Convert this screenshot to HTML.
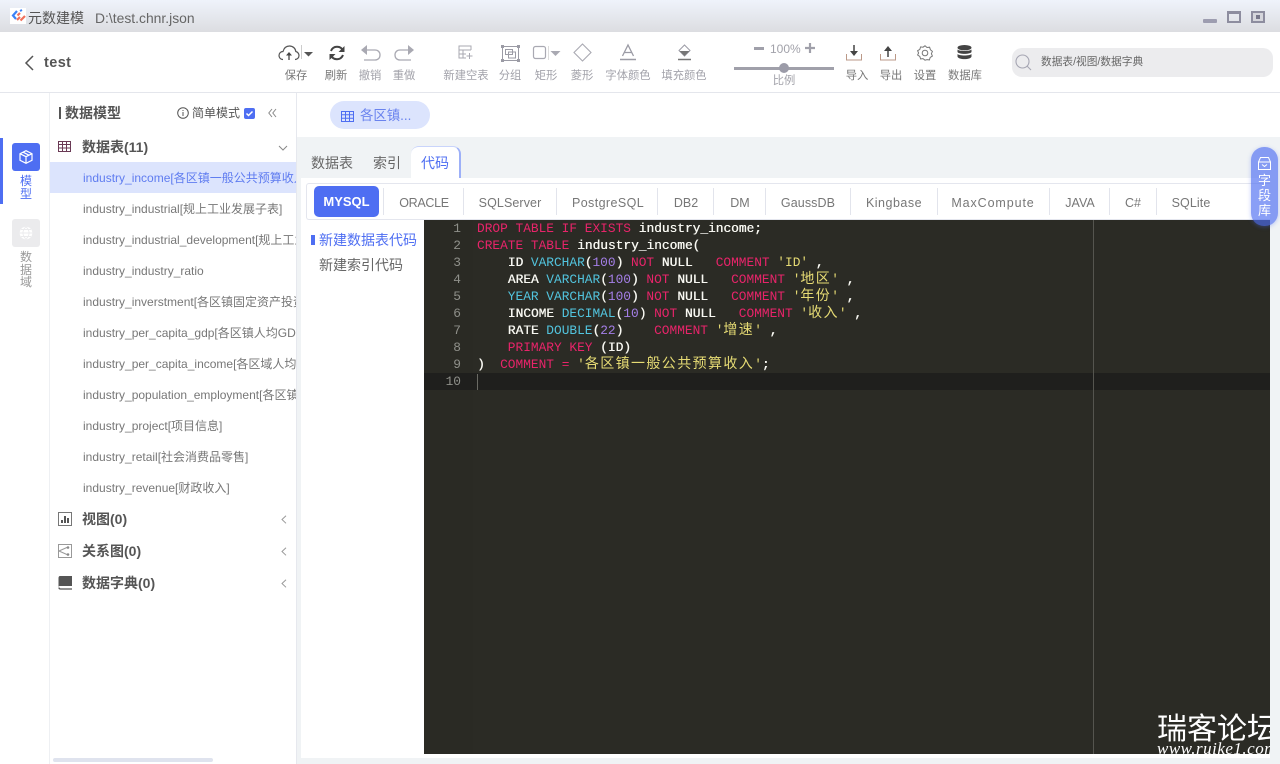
<!DOCTYPE html>
<html lang="zh"><head><meta charset="utf-8"><title>元数建模</title>
<style>
*{box-sizing:border-box;margin:0;padding:0}
html,body{width:1280px;height:764px;overflow:hidden;background:#fff;font-family:"Liberation Sans","Noto Sans CJK SC",sans-serif;color:#555}
.a{position:absolute;white-space:nowrap}
.lbl{position:absolute;top:69px;font-size:11.3px;line-height:14px;color:#777;transform:translateX(-50%);white-space:nowrap}
.lbl.dim{color:#a2a2aa}
.dim{color:#a2a2aa}
svg{position:absolute;overflow:visible}
.t{position:absolute;left:50px;width:246px;height:31px;line-height:33px;padding-left:33px;font-size:12px;color:#777;white-space:nowrap;overflow:hidden}
.g{position:absolute;left:82px;font-size:14px;font-weight:bold;color:#555;line-height:20px;white-space:nowrap}
.db{position:absolute;top:185px;height:35px;line-height:36px;font-size:12.5px;color:#777;transform:translateX(-50%);white-space:nowrap}
.sep{position:absolute;top:188px;width:1px;height:27px;background:#e2e4ec}
#code{position:absolute;left:477px;top:220px;font:12.83px/17px "Liberation Mono","Noto Sans CJK SC",monospace;color:#f8f8f2;white-space:pre;text-shadow:.35px 0 0 #f8f8f2}
#nums{position:absolute;left:424px;top:220px;width:37px;text-align:right;font:12.83px/17px "Liberation Mono",monospace;color:#8f908a}
.k{color:#e8246a;text-shadow:none}.y{color:#52c4de;text-shadow:none}.n{color:#a57fe8;text-shadow:none}.s{color:#e6db74;text-shadow:none}.c{font-size:14px;line-height:0;letter-spacing:1.4px}
</style></head><body>

<!-- title bar -->
<div class="a" style="left:0;top:0;width:1280px;height:32px;background:linear-gradient(#eff3fb,#dcdde1)"></div>
<svg style="left:10px;top:8px" width="16" height="16" viewBox="0 0 16 16"><rect width="16" height="16" fill="#fff"/><path d="M7 3L3 7.500 6 11" fill="none" stroke="#3b82f6" stroke-width="2.200"/><path d="M7 12l3-3M10 5L7.500 7.500" stroke="#f0705a" stroke-width="2.200"/><path d="M10 3l2-1" stroke="#3b82f6" stroke-width="2"/><path d="M10.500 12.500L15 8" stroke="#f0705a" stroke-width="2.200"/></svg>
<div class="a" style="left:28px;top:8px;font-size:14px;line-height:20px;color:#555">元数建模</div>
<div class="a" style="left:95px;top:9px;font-size:13.9px;line-height:18px;color:#666">D:\test.chnr.json</div>
<div class="a" style="left:1203px;top:19px;width:14px;height:4px;background:#9d9db0;border-radius:1px"></div>
<div class="a" style="left:1227px;top:11px;width:14px;height:12px;border:2px solid #8d8d9f;border-top-width:3px"></div>
<div class="a" style="left:1251px;top:11px;width:14px;height:12px;border:2px solid #8d8d9f;background:#d5d6dc"></div>
<div class="a" style="left:1256px;top:15px;width:4px;height:4px;background:#77778a"></div>

<!-- toolbar -->
<div class="a" style="left:0;top:92px;width:1280px;height:1px;background:#e4e6ec"></div>
<svg style="left:24px;top:55px" width="10" height="16" viewBox="0 0 10 16"><path d="M9 1L2 8l7 7" fill="none" stroke="#555" stroke-width="1.500"/></svg>
<div class="a" style="left:44px;top:53px;font-size:14.5px;font-weight:bold;line-height:20px;color:#555;letter-spacing:.4px">test</div>

<svg style="left:278px;top:44px" width="36" height="18" viewBox="0 0 36 18"><path d="M5 15.500C2 15.500 1 13 1 11.500 1 9 3 7.500 5 7.500 6 4 8.500 2 11.500 2 15 2 17.500 4.500 17.800 7.500 20 8 21 10 21 11.500 21 14 19 15.500 17 15.500" fill="none" stroke="#555" stroke-width="1.200"/><path d="M11 16V9" stroke="#444" stroke-width="1.300"/><path d="M8 11.500h6L11 8z" fill="#444"/><path d="M23.500 1v14" stroke="#ccc"/><path d="M26 8h9l-4.500 4.500z" fill="#555"/></svg>
<div class="lbl" style="left:296px">保存</div>
<svg style="left:329px;top:45px" width="16" height="16" viewBox="0 0 16 16"><path d="M14 6C13 3 10.500 1.800 8 1.800 5 1.800 3 3.500 2 6M2 10c1 3 3.500 4.200 6 4.200 3 0 5-1.700 6-4.200" fill="none" stroke="#444" stroke-width="2"/><path d="M15.500 1v6h-6zM.5 15V9h6z" fill="#444"/></svg>
<div class="lbl" style="left:336px">刷新</div>
<svg style="left:360px;top:44px" width="21" height="18" viewBox="0 0 21 18"><path d="M2 6h13c3 0 5 2 5 5s-2 5-5 5H4" fill="none" stroke="#a9a9b2" stroke-width="1.300"/><path d="M1 6l6-5v10z" fill="#a9a9b2"/></svg>
<div class="lbl dim" style="left:370px">撤销</div>
<svg style="left:394px;top:44px" width="21" height="18" viewBox="0 0 21 18"><path d="M19 6H6C3 6 1 8 1 11s2 5 5 5h11" fill="none" stroke="#a9a9b2" stroke-width="1.300"/><path d="M20 6l-6-5v10z" fill="#a9a9b2"/></svg>
<div class="lbl dim" style="left:404px">重做</div>

<svg style="left:458px;top:45px" width="15" height="15" viewBox="0 0 15 15"><path d="M13 5V1H1v12h7M1 5h12M1 9h7M5 5v8" fill="none" stroke="#a9a9b2"/><path d="M11.500 8v6M8.500 11h6" stroke="#a9a9b2"/></svg>
<div class="lbl dim" style="left:466px">新建空表</div>
<svg style="left:501px;top:45px" width="19" height="17" viewBox="0 0 19 17"><rect x="1.500" y="1.500" width="16" height="14" fill="none" stroke="#9b9ba5"/><rect x="4.500" y="4.500" width="7" height="5" fill="none" stroke="#9b9ba5"/><rect x="7.500" y="7" width="7" height="6" fill="none" stroke="#9b9ba5"/><path d="M0 0h3v3H0zM16 0h3v3h-3zM0 14h3v3H0zM16 14h3v3h-3z" fill="#9b9ba5"/></svg>
<div class="lbl dim" style="left:510px">分组</div>
<svg style="left:533px;top:46px" width="28" height="14" viewBox="0 0 28 14"><rect x=".5" y=".5" width="12" height="12" rx="2" fill="none" stroke="#a9a9b2" stroke-width="1.200"/><path d="M15.500 0v14" stroke="#ddd"/><path d="M17.500 5h10l-5 5z" fill="#a9a9b2"/></svg>
<div class="lbl dim" style="left:546px">矩形</div>
<svg style="left:573px;top:43px" width="19" height="19" viewBox="0 0 19 19"><path d="M9.500 1l8.500 8.500-8.500 8.500L1 9.500z" fill="none" stroke="#a9a9b2" stroke-width="1.100"/></svg>
<div class="lbl dim" style="left:582px">菱形</div>
<svg style="left:620px;top:44px" width="16" height="17" viewBox="0 0 16 17"><path d="M2.500 12L8 1l5.500 11M4.500 8.500h7" fill="none" stroke="#9b9ba5" stroke-width="1.300"/><path d="M0 15.500h16" stroke="#9b9ba5" stroke-width="1.500"/></svg>
<div class="lbl dim" style="left:628px">字体颜色</div>
<svg style="left:677px;top:44px" width="15" height="17" viewBox="0 0 15 17"><path d="M7.500 1l5.500 5.500L7.500 12 2 6.500z" fill="none" stroke="#9b9ba5"/><path d="M2.500 7h10l-5 5z" fill="#777"/><path d="M1 15.500h13" stroke="#777" stroke-width="1.500"/></svg>
<div class="lbl dim" style="left:684px">填充颜色</div>

<div class="a" style="left:754px;top:47px;width:10px;height:3px;background:#a0a0aa"></div>
<div class="a dim" style="left:770px;top:41px;font-size:12px;line-height:16px">100%</div>
<svg style="left:805px;top:43px" width="10" height="10" viewBox="0 0 10 10"><path d="M5 0v10M0 5h10" stroke="#a0a0aa" stroke-width="2.200"/></svg>
<div class="a" style="left:734px;top:67px;width:100px;height:3px;background:#a0a0aa"></div>
<div class="a" style="left:779px;top:63px;width:10px;height:10px;border-radius:50%;background:#9b9ba8"></div>
<div class="lbl dim" style="left:784px;top:74px">比例</div>

<svg style="left:846px;top:45px" width="16" height="16" viewBox="0 0 16 16"><path d="M.5 9v6h15V9" fill="none" stroke="#b98" stroke-width="1"/><path d="M8 0v7" stroke="#444" stroke-width="1.500"/><path d="M4 6h8l-4 5z" fill="#444"/></svg>
<div class="lbl" style="left:857px">导入</div>
<svg style="left:880px;top:45px" width="16" height="16" viewBox="0 0 16 16"><path d="M.5 9v6h15V9" fill="none" stroke="#b98" stroke-width="1"/><path d="M8 12V5" stroke="#444" stroke-width="1.500"/><path d="M4 6h8L8 1z" fill="#444"/></svg>
<div class="lbl" style="left:891px">导出</div>
<svg style="left:917px;top:45px" width="16" height="16" viewBox="0 0 16 16"><path d="M8 .8l2 1.700 2.600-.3.800 2.500 2 1.700-1 2.300 1 2.300-2.200 1.400-.8 2.500-2.400-.3L8 15.200l-2-1.600-2.400.3-.8-2.500L.6 10l1-2-1-2.300 2.200-1.300.8-2.500 2.400.3z" fill="none" stroke="#777" stroke-width="1"/><circle cx="8" cy="8" r="2.800" fill="none" stroke="#777"/></svg>
<div class="lbl" style="left:925px">设置</div>
<svg style="left:957px;top:45px" width="15" height="16" viewBox="0 0 15 16"><ellipse cx="7.500" cy="2.700" rx="7" ry="2.700" fill="#444"/><path d="M.5 4.500C2 6.500 13 6.500 14.500 4.500V7C13 9.500 2 9.500.5 7zM.5 9C2 11 13 11 14.500 9v2.500C14 15 1 15 .5 11.500z" fill="#444"/></svg>
<div class="lbl" style="left:965px">数据库</div>

<div class="a" style="left:1012px;top:48px;width:261px;height:29px;border-radius:10px;background:#ececee"></div>
<svg style="left:1015px;top:54px" width="17" height="17" viewBox="0 0 17 17"><circle cx="7.500" cy="7.500" r="6.500" fill="none" stroke="#a5a5b2" stroke-width="1.100"/><path d="M12 12l4 4" stroke="#a5a5b2" stroke-width="1.100"/></svg>
<div class="a" style="left:1041px;top:54px;font-size:10.700px;line-height:17px;color:#666">数据表/视图/数据字典</div>

<!-- left rail -->
<div class="a" style="left:49px;top:93px;width:1px;height:671px;background:#eef0f3"></div>
<div class="a" style="left:0;top:138px;width:3px;height:66px;background:#4e6ef2"></div>
<div class="a" style="left:12px;top:143px;width:28px;height:28px;border-radius:3px;background:#4e6ef2"></div>
<svg style="left:19px;top:150px" width="14" height="14" viewBox="0 0 14 14"><path d="M7 .7l6 3v6.600l-6 3-6-3V3.700zM1 3.700l6 3 6-3M7 6.700v6.600M4 2.200l6 3" fill="none" stroke="#fff" stroke-width="1.200"/></svg>
<div class="a" style="left:20px;top:175px;width:12px;font-size:12px;line-height:12.500px;color:#4e6ef2;white-space:normal">模型</div>
<div class="a" style="left:12px;top:219px;width:28px;height:28px;border-radius:3px;background:#ebebed"></div>
<svg style="left:19px;top:226px" width="14" height="14" viewBox="0 0 14 14"><circle cx="7" cy="7" r="6.300" fill="#fff"/><path d="M.7 7h12.600M7 .7c-4 4-4 8.600 0 12.600M7 .7c4 4 4 8.600 0 12.600M2 3.500h10M2 10.500h10" fill="none" stroke="#ebebed"/></svg>
<div class="a" style="left:20px;top:251px;width:12px;font-size:12px;line-height:12.500px;color:#999;white-space:normal">数据域</div>

<!-- tree -->
<div class="a" style="left:296px;top:93px;width:1px;height:671px;background:#e6e8ee"></div>
<div class="a" style="left:59px;top:107px;width:2px;height:12px;background:#555"></div>
<div class="a" style="left:65px;top:103px;font-size:14px;font-weight:bold;line-height:20px;color:#555">数据模型</div>
<svg style="left:177px;top:107px" width="12" height="12" viewBox="0 0 12 12"><circle cx="6" cy="6" r="5.300" fill="none" stroke="#555"/><path d="M6 5v4M6 3v1" stroke="#555"/></svg>
<div class="a" style="left:192px;top:105px;font-size:12px;line-height:16px;color:#555">简单模式</div>
<svg style="left:244px;top:108px" width="11" height="11" viewBox="0 0 11 11"><rect width="11" height="11" rx="2" fill="#4e6ef2"/><path d="M2.500 5.500l2 2 4-4" fill="none" stroke="#fff" stroke-width="1.500"/></svg>
<svg style="left:268px;top:108px" width="9" height="10" viewBox="0 0 9 10"><path d="M4 1L.8 5 4 9M8 1L4.800 5 8 9" fill="none" stroke="#888"/></svg>

<svg style="left:58px;top:141px" width="13" height="11" viewBox="0 0 13 11"><path d="M.5.500h12v10H.5zM.5 3.500h12M.5 7h12M4.500.5v10M8.500.5v10" fill="none" stroke="#6a3a55"/></svg>
<div class="g" style="top:137px">数据表(11)</div>
<svg style="left:278px;top:145px" width="10" height="6" viewBox="0 0 10 6"><path d="M1 1l4 4 4-4" fill="none" stroke="#888"/></svg>

<div class="t" style="top:162px;background:#dce4fd;color:#5f7cf0">industry_income[各区镇一般公共预算收入]</div>
<div class="t" style="top:193px">industry_industrial[规上工业发展子表]</div>
<div class="t" style="top:224px">industry_industrial_development[规上工业发展]</div>
<div class="t" style="top:255px">industry_industry_ratio</div>
<div class="t" style="top:286px">industry_inverstment[各区镇固定资产投资]</div>
<div class="t" style="top:317px">industry_per_capita_gdp[各区镇人均GDP]</div>
<div class="t" style="top:348px">industry_per_capita_income[各区域人均可支配]</div>
<div class="t" style="top:379px">industry_population_employment[各区镇人口]</div>
<div class="t" style="top:410px">industry_project[项目信息]</div>
<div class="t" style="top:441px">industry_retail[社会消费品零售]</div>
<div class="t" style="top:472px">industry_revenue[财政收入]</div>

<svg style="left:58px;top:512px" width="14" height="14" viewBox="0 0 14 14"><rect x=".5" y=".5" width="13" height="13" fill="none" stroke="#777"/><path d="M3 8h2v3H3zM6 4h2v7H6zM9 6h2v5H9z" fill="#555"/></svg>
<div class="g" style="top:509px">视图(0)</div>
<svg style="left:281px;top:515px" width="6" height="9" viewBox="0 0 6 9"><path d="M5 .7L1 4.500 5 8.300" fill="none" stroke="#999"/></svg>
<svg style="left:58px;top:544px" width="14" height="14" viewBox="0 0 14 14"><rect x=".5" y=".5" width="13" height="13" fill="none" stroke="#999"/><path d="M1 7l9-4M1 7l9 4" stroke="#999"/><circle cx="10" cy="3.500" r="1.300" fill="#888"/><circle cx="10" cy="10.500" r="1.300" fill="#888"/></svg>
<div class="g" style="top:541px">关系图(0)</div>
<svg style="left:281px;top:547px" width="6" height="9" viewBox="0 0 6 9"><path d="M5 .7L1 4.500 5 8.300" fill="none" stroke="#999"/></svg>
<svg style="left:58px;top:576px" width="14" height="14" viewBox="0 0 14 14"><path d="M2 0h12v10H2C1 10 .5 10.500 .5 11V2C.5 1 1 0 2 0z" fill="#555"/><path d="M1 11.500C1 12.500 1.500 13 2.500 13H14" fill="none" stroke="#555" stroke-width="1.300"/></svg>
<div class="g" style="top:573px">数据字典(0)</div>
<svg style="left:281px;top:579px" width="6" height="9" viewBox="0 0 6 9"><path d="M5 .7L1 4.500 5 8.300" fill="none" stroke="#999"/></svg>
<div class="a" style="left:53px;top:758px;width:160px;height:4px;border-radius:2px;background:#dfe3ee"></div>

<!-- main -->
<div class="a" style="left:297px;top:137px;width:983px;height:627px;background:#f0f3f5"></div>
<div class="a" style="left:330px;top:101px;width:100px;height:28px;border-radius:14px;background:#dce4fd"></div>
<svg style="left:341px;top:111px" width="13" height="11" viewBox="0 0 13 11"><path d="M.5.500h12v10H.5zM.5 3.800h12M.5 7.200h12M4.500.5v10M8.500.5v10" fill="none" stroke="#4e6ef2"/></svg>
<div class="a" style="left:360px;top:107px;font-size:13.400px;line-height:18px;color:#6a83ee">各区镇...</div>

<div class="a" style="left:311px;top:154px;font-size:14px;line-height:18px;color:#666">数据表</div>
<div class="a" style="left:373px;top:154px;font-size:14px;line-height:18px;color:#666">索引</div>
<div class="a" style="left:411px;top:146px;width:50px;height:33px;background:#fff;border-radius:8px 8px 0 0;border-top:1px solid #c9d4fb;border-right:2px solid #9db0f8"></div>
<div class="a" style="left:421px;top:154px;font-size:14px;line-height:18px;color:#4e6ef2">代码</div>

<div class="a" style="left:301px;top:178px;width:969px;height:580px;background:#fff"></div>
<div class="a" style="left:306px;top:183px;width:964px;height:37px;border:1px solid #e4e6ee;border-right:0;border-radius:3px 0 0 3px"></div>
<div class="a" style="left:314px;top:186px;width:65px;height:31px;border-radius:5px;background:#4e6ef2;color:#fff;font-size:13px;font-weight:bold;text-align:center;line-height:32px">MYSQL</div>
<div class="sep" style="left:383px"></div><div class="db" style="left:424px;letter-spacing:-.3px">ORACLE</div>
<div class="sep" style="left:463px"></div><div class="db" style="left:510px;letter-spacing:.1px">SQLServer</div>
<div class="sep" style="left:556px"></div><div class="db" style="left:608px;letter-spacing:.4px">PostgreSQL</div>
<div class="sep" style="left:657px"></div><div class="db" style="left:686px">DB2</div>
<div class="sep" style="left:713px"></div><div class="db" style="left:740px">DM</div>
<div class="sep" style="left:765px"></div><div class="db" style="left:808px;letter-spacing:.1px">GaussDB</div>
<div class="sep" style="left:850px"></div><div class="db" style="left:894px;letter-spacing:.5px">Kingbase</div>
<div class="sep" style="left:937px"></div><div class="db" style="left:993px;letter-spacing:.9px">MaxCompute</div>
<div class="sep" style="left:1049px"></div><div class="db" style="left:1080px">JAVA</div>
<div class="sep" style="left:1109px"></div><div class="db" style="left:1133px">C#</div>
<div class="sep" style="left:1156px"></div><div class="db" style="left:1191px;letter-spacing:.1px">SQLite</div>

<div class="a" style="left:311px;top:235px;width:4px;height:10px;background:#4e6ef2"></div>
<div class="a" style="left:319px;top:231px;font-size:14px;line-height:18px;color:#4e6ef2">新建数据表代码</div>
<div class="a" style="left:319px;top:256px;font-size:14px;line-height:18px;color:#666">新建索引代码</div>

<!-- editor -->
<div class="a" style="left:424px;top:220px;width:846px;height:534px;background:#2b2b25"></div>
<div class="a" style="left:424px;top:220px;width:49px;height:534px;background:#2a2a24"></div>
<div class="a" style="left:424px;top:373px;width:846px;height:17px;background:#1f1f1d"></div>
<div class="a" style="left:1093px;top:220px;width:1px;height:534px;background:#55554f"></div>
<div class="a" style="left:477px;top:374px;width:1px;height:16px;background:#6a6a64"></div>
<div id="nums">1<br>2<br>3<br>4<br>5<br>6<br>7<br>8<br>9<br>10</div>
<div id="code"><span class="k">DROP TABLE IF EXISTS</span> industry_income;
<span class="k">CREATE TABLE</span> industry_income(
    ID <span class="y">VARCHAR</span>(<span class="n">100</span>) <span class="k">NOT</span> NULL   <span class="k">COMMENT</span> <span class="s">'ID'</span> ,
    AREA <span class="y">VARCHAR</span>(<span class="n">100</span>) <span class="k">NOT</span> NULL   <span class="k">COMMENT</span> <span class="s">'<span class="c">地区</span>'</span> ,
    <span class="y">YEAR</span> <span class="y">VARCHAR</span>(<span class="n">100</span>) <span class="k">NOT</span> NULL   <span class="k">COMMENT</span> <span class="s">'<span class="c">年份</span>'</span> ,
    INCOME <span class="y">DECIMAL</span>(<span class="n">10</span>) <span class="k">NOT</span> NULL   <span class="k">COMMENT</span> <span class="s">'<span class="c">收入</span>'</span> ,
    RATE <span class="y">DOUBLE</span>(<span class="n">22</span>)    <span class="k">COMMENT</span> <span class="s">'<span class="c">增速</span>'</span> ,
    <span class="k">PRIMARY KEY</span> (ID)
)  <span class="k">COMMENT</span> <span class="k">=</span> <span class="s">'<span class="c">各区镇一般公共预算收入</span>'</span>;
</div>

<!-- watermark -->
<div class="a" style="left:1150px;top:700px;width:120px;height:54px;overflow:hidden">
<div class="a" style="left:7px;top:8px;font:30px/36px 'Noto Sans CJK SC',sans-serif;color:#fff">瑞客论坛</div>
<div class="a" style="left:7px;top:41px;font:italic 17px/16px 'Liberation Serif',serif;color:#fff;letter-spacing:.5px">www.ruike1.com</div>
</div>

<!-- side button -->
<div class="a" style="left:1251px;top:147px;width:27px;height:79px;border-radius:13px;background:rgba(78,110,242,.66);box-shadow:0 1px 4px rgba(78,110,242,.35)"></div>
<svg style="left:1258px;top:157px" width="13" height="13" viewBox="0 0 13 13"><path d="M.5 5l2-4.500h8l2 4.500v7.500H.5zM.5 5h12M4 7.500l2.500 2 2.500-2" fill="none" stroke="#fff"/></svg>
<div class="a" style="left:1258px;top:173px;width:13px;font-size:13px;line-height:15px;color:#fff;white-space:normal">字段库</div>
</body></html>
